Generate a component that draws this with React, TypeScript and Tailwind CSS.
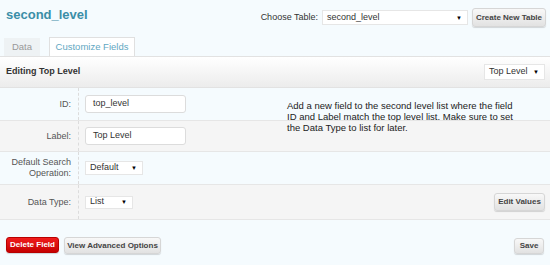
import React from 'react';

const Caret = () => <span className="text-[6px] text-black leading-none">▼</span>;

const SelectBox = ({ value, className }: { value: string; className: string }) => (
  <div className={`flex items-center justify-between bg-white border border-[#e6e6e6] pl-[4px] pr-[5px] text-[9px] text-[#333] whitespace-nowrap ${className}`}>
    <span>{value}</span>
    <Caret />
  </div>
);

const GrayButton = ({ label, className }: { label: string; className: string }) => (
  <div className={`flex items-center justify-center whitespace-nowrap rounded-[3px] border border-[#d6d6d6] bg-gradient-to-b from-[#f8f8f8] to-[#e2e2e2] shadow-[0_1px_1px_rgba(0,0,0,0.15)] text-[8px] font-bold text-[#444] ${className}`}>
    {label}
  </div>
);

const Row = ({ label, bg, h, children, right }: any) => (
  <div className={`flex ${bg} ${h} border-b border-[#e6e6e6]`}>
    <div className="w-[79px] shrink-0 border-r border-dashed border-[#dcdcdc] flex items-center justify-end pr-[7px] text-[9px] text-[#555] text-right leading-[11px] whitespace-nowrap">
      {label}
    </div>
    <div className="flex-1 flex items-center justify-between pl-[6px] pr-[5px]">
      {children}
      {right}
    </div>
  </div>
);

export default function App() {
  return (
    <div className="relative w-[550px] h-[265px] bg-[#f5fbfe] overflow-hidden" style={{ fontFamily: '"Liberation Sans", Arial, sans-serif' }}>
      {/* top */}
      <div className="flex items-start justify-between pl-[6px] pr-[4px] pt-[7px] h-[37px]">
        <div className="text-[13px] font-bold text-[#3b8ea7] leading-[16px]">second_level</div>
        <div className="flex items-center gap-[3px] pt-[1px]">
          <span className="text-[9px] text-[#333] mr-[1px] whitespace-nowrap">Choose Table:</span>
          <SelectBox value="second_level" className="w-[146px] h-[15px]" />
          <GrayButton label="Create New Table" className="w-[74px] h-[19px] ml-[1px]" />
        </div>
      </div>

      {/* tabs */}
      <div className="flex items-end h-[19px] pl-[4px] gap-[9px]">
        <div className="w-[36px] h-[18px] bg-[#eef2f4] flex items-center justify-center text-[9.5px] text-[#999]">Data</div>
        <div className="w-[86px] h-[19px] bg-white border border-b-0 border-[#e0e0e0] flex items-center justify-center text-[9.5px] text-[#5fa7c2] whitespace-nowrap">Customize Fields</div>
      </div>

      {/* header */}
      <div className="flex items-center justify-between h-[32px] bg-gradient-to-b from-white to-[#ececec] border-t border-b border-[#e2e2e2] pl-[6px] pr-[5px]">
        <span className="text-[9px] font-bold text-[#333]">Editing Top Level</span>
        <SelectBox value="Top Level" className="w-[61px] h-[16px]" />
      </div>

      <Row label="ID:" bg="bg-[#f5fbfe]" h="h-[33px]">
        <div className="w-[101px] h-[18px] bg-white border border-[#dcdcdc] rounded-[3px] flex items-center pl-[7px] text-[9px] text-[#333]">top_level</div>
      </Row>
      <Row label="Label:" bg="bg-[#f5f5f5]" h="h-[31px]">
        <div className="w-[101px] h-[18px] bg-white border border-[#dcdcdc] rounded-[3px] flex items-center pl-[7px] text-[9px] text-[#333]">Top Level</div>
      </Row>
      <Row label={<>Default Search<br />Operation:</>} bg="bg-[#f5fbfe]" h="h-[33px]">
        <SelectBox value="Default" className="w-[58px] h-[14px]" />
      </Row>
      <Row label="Data Type:" bg="bg-[#f5f5f5]" h="h-[35px]" right={<GrayButton label="Edit Values" className="w-[51px] h-[18px] -mt-[1px]" />}>
        <SelectBox value="List" className="w-[48px] h-[13px]" />
      </Row>

      {/* footer */}
      <div className="flex items-center justify-between pl-[6px] pr-[6px] pt-[17px]">
        <div className="flex gap-[5px]">
          <div className="w-[53px] h-[16px] rounded-[3px] border border-[#b80000] bg-gradient-to-b from-[#f01c1c] to-[#c60000] flex items-center justify-center text-[8px] font-bold text-white whitespace-nowrap shadow-[0_1px_1px_rgba(0,0,0,0.15)]">Delete Field</div>
          <GrayButton label="View Advanced Options" className="w-[97px] h-[17px]" />
        </div>
        <GrayButton label="Save" className="w-[30px] h-[16px] mt-[1px]" />
      </div>

      {/* note */}
      <div className="absolute left-[287px] top-[100px] text-[9.5px] leading-[11px] text-[#222] whitespace-nowrap">
        Add a new field to the second level list where the field<br />
        ID and Label match the top level list. Make sure to set<br />
        the Data Type to list for later.
      </div>
    </div>
  );
}
